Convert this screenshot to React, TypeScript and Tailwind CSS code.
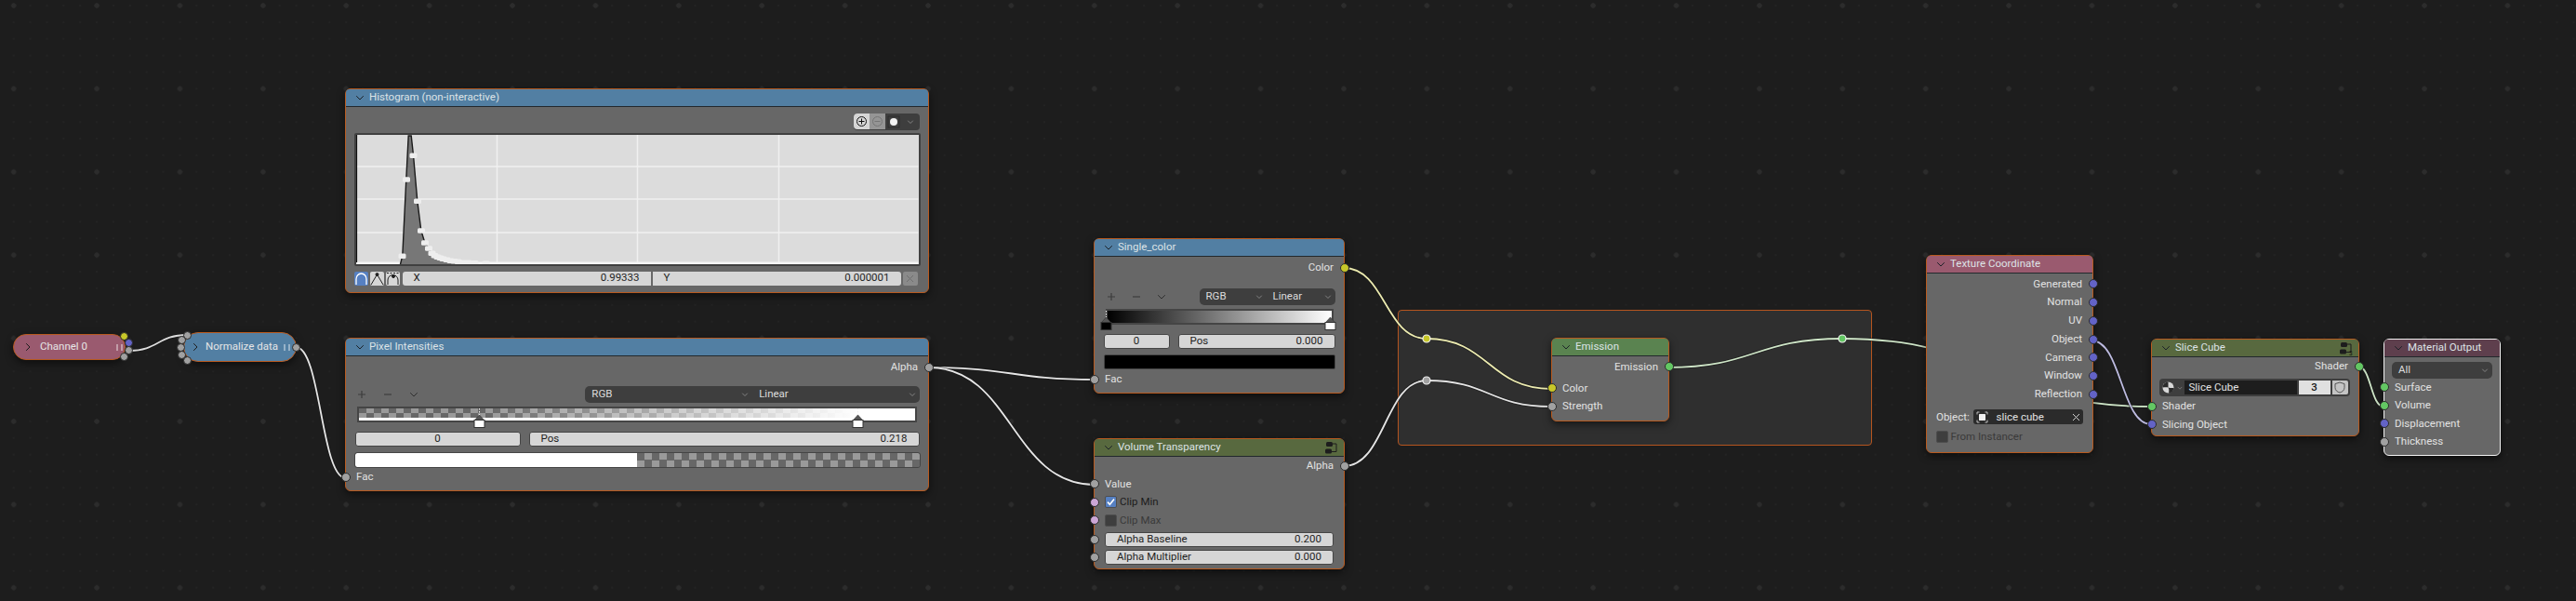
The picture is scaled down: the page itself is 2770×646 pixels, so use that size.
import React, { ReactNode } from 'react';

const socketColors = {
  gray: 'bg-[#a1a1a1]',
  yellow: 'bg-[#c7c729]',
  blue: 'bg-[#6363c7]',
  green: 'bg-[#63c763]',
  pink: 'bg-[#cca6d6]',
};

type SocketColor = keyof typeof socketColors;

function Socket({ side, color = 'gray' }: { side: 'left' | 'right'; color?: SocketColor }) {
  return (
    <span
      className={`absolute top-1/2 -translate-y-1/2 w-[10px] h-[10px] rounded-full border border-[#2b2b2b] z-10 ${socketColors[color]} ${
        side === 'left' ? 'left-[-5.5px]' : 'right-[-5.5px]'
      }`}
    />
  );
}

function Chevron({ className = 'text-[#1c2228]' }: { className?: string }) {
  return (
    <svg width="10" height="10" viewBox="0 0 10 10" className={`shrink-0 ${className}`}>
      <path d="M1.2 3.2 5 7l3.8-3.8" fill="none" stroke="currentColor" strokeWidth="1" />
    </svg>
  );
}

function GroupIcon({ count }: { count?: string }) {
  return (
    <svg width="16" height="15" viewBox="0 0 16 15" className="shrink-0 text-[#1d1d1d]">
      <rect x="2" y="1" width="7" height="5" rx="1.5" fill="currentColor" />
      <rect x="1" y="8.5" width="7" height="5" rx="1.5" fill="currentColor" />
      <path d="M9 3h4v8.5H8" fill="none" stroke="currentColor" strokeWidth="1" />
      {count && (
        <text x="11" y="14.5" fontSize="6.5" fontFamily="Roboto, sans-serif" fill="#111">
          {count}
        </text>
      )}
    </svg>
  );
}

function Node({
  className,
  title,
  header,
  icon,
  children,
}: {
  className: string;
  title: string;
  header: string;
  icon?: ReactNode;
  children: ReactNode;
}) {
  return (
    <div className={`absolute rounded-[6px] border-[1.5px] bg-[#676767] shadow-[0_3px_8px_rgba(0,0,0,0.55)] ${className}`}>
      <div className={`flex items-center h-[19px] pl-[10px] pr-[5px] gap-[5px] rounded-t-[4px] border-b border-[#22282c] text-[#dde3e6] ${header}`}>
        <Chevron />
        <span className="flex-1 whitespace-nowrap">{title}</span>
        {icon}
      </div>
      {children}
    </div>
  );
}

function Row({
  className = 'h-[19.5px]',
  left,
  right,
  align = 'left',
  children,
}: {
  className?: string;
  left?: SocketColor;
  right?: SocketColor;
  align?: 'left' | 'right';
  children?: ReactNode;
}) {
  return (
    <div className={`relative flex items-center text-[#e2e2e2] ${align === 'right' ? 'justify-end pr-[11px]' : 'pl-[11px]'} ${className}`}>
      {left && <Socket side="left" color={left} />}
      {right && <Socket side="right" color={right} />}
      {children}
    </div>
  );
}

function Field({ className, label, value }: { className: string; label?: string; value: string }) {
  return (
    <div className={`flex items-center h-[16px] rounded-[3px] border-[1.5px] border-[#454545] bg-[#d6d6d6] text-[#1f1f1f] ${label ? 'justify-between px-[12px]' : 'justify-center'} ${className}`}>
      {label && <span>{label}</span>}
      <span>{value}</span>
    </div>
  );
}

function Dropdown({ className, label }: { className: string; label: string }) {
  return (
    <div className={`flex items-center justify-between h-[18px] bg-[#3e3e3e] text-[#dcdcdc] pl-[7px] pr-[3px] ${className}`}>
      <span>{label}</span>
      <Chevron className="text-[#9a9a9a] scale-75" />
    </div>
  );
}

function RampToolbar({ plusClass, leftClass, rgbClass, linearClass }: { plusClass: string; leftClass: string; rgbClass: string; linearClass: string }) {
  return (
    <div className={`flex items-center ${leftClass}`}>
      <div className={`flex items-center text-[#3d3d3d] ${plusClass}`}>
        <svg width="10" height="10" viewBox="0 0 10 10"><path d="M5 1v8M1 5h8" stroke="currentColor" strokeWidth="1.2" /></svg>
        <svg width="10" height="10" viewBox="0 0 10 10"><path d="M1 5h8" stroke="currentColor" strokeWidth="1.2" /></svg>
        <Chevron className="text-[#2f2f2f]" />
      </div>
      <Dropdown className={`rounded-l-[5px] ${rgbClass}`} label="RGB" />
      <Dropdown className={`rounded-r-[5px] ${linearClass}`} label="Linear" />
    </div>
  );
}

function RampHandle({ className, fill = '#ffffff' }: { className: string; fill?: string }) {
  return (
    <svg width="13" height="21" viewBox="0 0 13 21" className={`absolute top-0 ${className}`}>
      <path d="M6.5 0v7" stroke="#eeeeee" strokeWidth="1" strokeDasharray="1.5 1.5" />
      <path d="M6.5 7 1.5 12.5h10z" fill="#555555" stroke="#333333" strokeWidth="0.6" />
      <rect x="1" y="12.5" width="11" height="8" fill={fill} stroke="#333333" />
    </svg>
  );
}

function Checkbox({ checked }: { checked?: boolean }) {
  return (
    <span className={`flex items-center justify-center w-[13px] h-[13px] rounded-[2px] border border-[#4d4d4d] shrink-0 ${checked ? 'bg-[#5680c2]' : 'bg-[#3e3e3e]'}`}>
      {checked && (
        <svg width="11" height="11" viewBox="0 0 11 11">
          <path d="m2 5.6 2.4 2.6L9 2.4" fill="none" stroke="#fff" strokeWidth="1.6" />
        </svg>
      )}
    </span>
  );
}

function CurveButton({ active, children }: { active?: boolean; children: ReactNode }) {
  return (
    <span className={`flex items-center justify-center w-[15px] h-[15px] rounded-[2px] ${active ? 'bg-[#5680c2] text-white' : 'bg-[#d6d6d6] text-[#1f1f1f]'}`}>
      <svg width="15" height="15" viewBox="0 0 15 15" fill="none" stroke="currentColor" strokeWidth="1">
        {children}
      </svg>
    </span>
  );
}

function Histogram() {
  const curve: [number, number][] = [
    [430, 284], [432.3, 275], [436.3, 192.7], [438.7, 146], [441.7, 146], [444, 166.7], [448.3, 216], [452.3, 247.7], [456.3, 260.7],
    [460.3, 266.7], [464.3, 273.3], [471.7, 277.3], [481.7, 280], [491.7, 284],
  ];
  const dots: [number, number][] = [
    [432, 275], [436.5, 192.7], [444, 167], [448.5, 216], [452.5, 247.7], [456.5, 260.7], [460.5, 266.7], [464, 272], [467, 274.5], [470, 276],
    [473, 277], [476, 278], [480, 279], [484, 280], [488, 280.5], [492, 281], [497, 282], [503, 282], [510, 282.5], [522, 283],
  ];
  const line = curve.map((p) => p.join(',')).join(' ');
  return (
    <div className="mt-[3px] h-[143px] border-2 border-[#404040] bg-[#dcdcdc] rounded-[2px]">
      <svg viewBox="383 145 604 139" className="w-full h-full block">
        {[534, 685, 837].map((x) => (
          <path key={x} d={`M${x} 145v139`} stroke="#f0f0f0" strokeWidth="1.5" />
        ))}
        {[179, 214, 250].map((y) => (
          <path key={y} d={`M383 ${y}h604`} stroke="#f0f0f0" strokeWidth="1.5" />
        ))}
        <path d="M383 283h604" stroke="#f4f4f4" strokeWidth="3" />
        <path d="M383 145v137" stroke="#111" strokeWidth="1.2" />
        <polygon points={line} fill="#777777" />
        <polyline points={line} fill="none" stroke="#1a1a1a" strokeWidth="1.4" />
        {dots.map(([x, y]) => (
          <rect key={x} x={x - 4} y={y - 2.5} width="8" height="5.5" rx="1.5" fill="#eeeeee" />
        ))}
      </svg>
    </div>
  );
}

function Wire({ from, to, color }: { from: [number, number]; to: [number, number]; color: string }) {
  const dx = Math.abs(to[0] - from[0]) * 0.5;
  const d = `M${from[0]} ${from[1]}C${from[0] + dx} ${from[1]} ${to[0] - dx} ${to[1]} ${to[0]} ${to[1]}`;
  return (
    <>
      <path d={d} fill="none" stroke="#151515" strokeOpacity="0.6" strokeWidth="3.4" />
      <path d={d} fill="none" stroke={color} strokeWidth="1.8" />
    </>
  );
}

const wires: { from: [number, number]; to: [number, number]; color: string }[] = [
  { from: [139, 377], to: [201, 360], color: '#dcdcdc' },
  { from: [318, 373], to: [372, 514], color: '#e4e4e4' },
  { from: [999, 395], to: [1177, 408], color: '#e6e6e6' },
  { from: [999, 395], to: [1177, 521], color: '#e6e6e6' },
  { from: [1445, 288], to: [1534, 364], color: '#ecebb0' },
  { from: [1534, 364], to: [1668, 418], color: '#ecebb0' },
  { from: [1445, 501], to: [1534, 409], color: '#e4e4e4' },
  { from: [1534, 409], to: [1668, 437], color: '#e4e4e4' },
  { from: [1793, 395], to: [1981, 364], color: '#cfe6c8' },
  { from: [1981, 364], to: [2313, 437], color: '#cfe6c8' },
  { from: [2249, 366], to: [2313, 456], color: '#bdbbe0' },
  { from: [2536, 394], to: [2563, 437], color: '#cfe6c8' },
];

function PinMarks() {
  return (
    <span className="flex gap-[3px] opacity-40 shrink-0">
      <span className="w-[2px] h-[7px] bg-white" />
      <span className="w-[2px] h-[7px] bg-white" />
    </span>
  );
}

export default function App() {
  return (
    <div className="relative w-[2770px] h-[646px] overflow-hidden bg-[#1d1d1d] font-[Roboto,sans-serif] text-[11.5px] leading-none bg-[radial-gradient(circle,#2c2c2c_2.4px,transparent_3px),radial-gradient(circle,#232323_1px,transparent_1.5px)] [background-size:89.4px_89.4px,17.88px_17.88px] [background-position:-30px_-38.7px,5.76px_-2.94px]">
      {/* frame behind the emission node */}
      <div className="absolute left-[1503px] top-[333px] w-[510px] h-[146px] rounded-[4px] border border-[#b5551f] bg-[#2f2f2f]" />

      <svg width="2770" height="646" className="absolute left-0 top-0">
        {wires.map((w) => (
          <Wire key={`${w.from}-${w.to}`} {...w} />
        ))}
        <circle cx="1534" cy="364" r="4" fill="#c7c729" stroke="#f2f2f2" strokeWidth="1.2" />
        <circle cx="1534" cy="409" r="4" fill="#a1a1a1" stroke="#f2f2f2" strokeWidth="1.2" />
        <circle cx="1981" cy="364" r="4" fill="#63c763" stroke="#f2f2f2" strokeWidth="1.2" />
      </svg>

      {/* collapsed nodes */}
      <div className="absolute left-[14px] top-[359px] w-[121px] h-[28px] rounded-[14px] border-[1.5px] border-[#b85a1f] bg-[#9a5a6f] flex items-center pl-[10px] pr-[2px] gap-[8px] text-[#e6e6e6] shadow-[0_3px_8px_rgba(0,0,0,0.55)]">
        <Chevron className="text-[#1d1d1d] -rotate-90" />
        <span className="flex-1 whitespace-nowrap">Channel 0</span>
        <PinMarks />
        <span className="absolute left-[114px] top-[-3px] w-[9px] h-[9px] rounded-full border border-[#2b2b2b] bg-[#c7c729]" />
        <span className="absolute left-[119px] top-[4px] w-[9px] h-[9px] rounded-full border border-[#2b2b2b] bg-[#6363c7]" />
        <span className="absolute left-[119px] top-[12px] w-[9px] h-[9px] rounded-full border border-[#2b2b2b] bg-[#a1a1a1]" />
        <span className="absolute left-[114px] top-[19px] w-[9px] h-[9px] rounded-full border border-[#2b2b2b] bg-[#a1a1a1]" />
      </div>

      <div className="absolute left-[197px] top-[357px] w-[122px] h-[32px] rounded-[16px] border-[1.5px] border-[#b85a1f] bg-[#527fa3] flex items-center pl-[7px] pr-[6px] gap-[6px] text-[#e6e6e6] shadow-[0_3px_8px_rgba(0,0,0,0.55)]">
        <Chevron className="text-[#1d1d1d] -rotate-90" />
        <span className="flex-1 whitespace-nowrap">Normalize data</span>
        <PinMarks />
        <span className="absolute left-[-1.5px] top-[-2.5px] w-[9px] h-[9px] rounded-full border border-[#2b2b2b] bg-[#a1a1a1]" />
        <span className="absolute left-[-7.5px] top-[2.5px] w-[9px] h-[9px] rounded-full border border-[#2b2b2b] bg-[#a1a1a1]" />
        <span className="absolute left-[-8.5px] top-[10.5px] w-[9px] h-[9px] rounded-full border border-[#2b2b2b] bg-[#a1a1a1]" />
        <span className="absolute left-[-7.5px] top-[18.5px] w-[9px] h-[9px] rounded-full border border-[#2b2b2b] bg-[#a1a1a1]" />
        <span className="absolute left-[-1.5px] top-[24.5px] w-[9px] h-[9px] rounded-full border border-[#2b2b2b] bg-[#a1a1a1]" />
        <span className="absolute right-[-5px] top-[10.5px] w-[9px] h-[9px] rounded-full border border-[#2b2b2b] bg-[#a1a1a1]" />
      </div>

      {/* histogram */}
      <Node className="left-[371px] top-[95px] w-[628px] h-[220px] border-[#b85a1f]" header="bg-[#527fa3]" title="Histogram (non-interactive)">
        <div className="px-[8.5px] pt-[6.5px]">
          <div className="flex justify-end">
            <div className="flex items-center w-[71px] h-[18px] rounded-[4px] bg-[#3e3e3e] mr-[0.5px]">
              <span className="flex items-center justify-center w-[17px] h-[17px] bg-[#d6d6d6] rounded-l-[4px]">
                <svg width="13" height="13" viewBox="0 0 13 13" fill="none" stroke="#111" strokeWidth="1">
                  <circle cx="6.5" cy="6.5" r="5" />
                  <path d="M6.5 3.5v6M3.5 6.5h6" />
                </svg>
              </span>
              <span className="flex items-center justify-center w-[17px] h-[17px] bg-[#959595]">
                <svg width="13" height="13" viewBox="0 0 13 13" fill="none" stroke="#757575" strokeWidth="1">
                  <circle cx="6.5" cy="6.5" r="5" />
                  <path d="M3.5 6.5h6" />
                </svg>
              </span>
              <span className="flex items-center justify-center w-[17px] h-[17px]">
                <svg width="14" height="14" viewBox="0 0 14 14">
                  <rect x="1" y="1" width="12" height="12" fill="none" stroke="#2c2c2c" />
                  <circle cx="7" cy="7" r="4" fill="#f2f2f2" />
                </svg>
              </span>
              <span className="flex flex-1 justify-center">
                <Chevron className="text-[#9a9a9a] scale-75" />
              </span>
            </div>
          </div>
          <Histogram />
          <div className="flex items-center h-[15px] mt-[6px] gap-[2px] text-[#1f1f1f]">
            <CurveButton active>
              <path d="M2 14V8a5.5 6 0 0 1 11 0v6" strokeWidth="1.3" />
            </CurveButton>
            <CurveButton>
              <path d="M1 14 7.5 3 14 14" />
              <circle cx="7.5" cy="3" r="1.5" fill="currentColor" />
            </CurveButton>
            <CurveButton>
              <path d="M2 14V9a5.5 5.5 0 0 1 11 0v5" />
              <path d="M1 1.5h13" strokeDasharray="2 1.5" />
              <circle cx="8" cy="5" r="1.5" fill="currentColor" />
            </CurveButton>
            <div className="flex items-center justify-between w-[267px] h-[15px] px-[12px] bg-[#d6d6d6] rounded-l-[3px] ml-[1px]">
              <span>X</span>
              <span>0.99333</span>
            </div>
            <div className="flex items-center justify-between w-[267px] h-[15px] px-[12px] bg-[#d6d6d6] rounded-r-[3px]">
              <span>Y</span>
              <span>0.000001</span>
            </div>
            <span className="flex items-center justify-center w-[16px] h-[15px] rounded-[2px] bg-[#8a8a8a] text-[#6f6f6f]">
              <svg width="9" height="9" viewBox="0 0 9 9"><path d="m1 1 7 7M8 1 1 8" stroke="currentColor" strokeWidth="1" /></svg>
            </span>
          </div>
        </div>
      </Node>

      {/* pixel intensities */}
      <Node className="left-[371px] top-[363px] w-[628px] h-[165px] border-[#b85a1f]" header="bg-[#527fa3]" title="Pixel Intensities">
        <Row className="h-[20px] mt-[1.5px]" align="right" right="gray">Alpha</Row>
        <RampToolbar leftClass="mt-[10px] pl-[12px] pr-[9px]" plusClass="w-[245.5px] gap-[18px]" rgbClass="w-[180px]" linearClass="w-[180px]" />
        <div className="relative h-[16.5px] mx-[12px] mt-[4.5px] border-2 border-[#454545] bg-white">
          <div className="h-[10px] overflow-hidden bg-[#9a9a9a] [background-image:repeating-conic-gradient(#9a9a9a_0_25%,#676767_0_50%)] [background-size:16px_10px]">
            <div className="h-full bg-[linear-gradient(to_right,transparent_22%,#ffffff_90%)]" />
          </div>
          <RampHandle className="left-[123px]" />
          <RampHandle className="left-[530px]" />
        </div>
        <div className="flex mt-[10px] gap-[9px] px-[9.5px]">
          <Field className="w-[178px]" value="0" />
          <Field className="flex-1" label="Pos" value="0.218" />
        </div>
        <div className="flex h-[15px] mt-[7px] mx-[9.5px] rounded-[2px] outline-[1.5px] outline-[#454545] overflow-hidden">
          <div className="w-1/2 bg-white" />
          <div className="w-1/2 bg-[#9a9a9a] [background-image:repeating-conic-gradient(#9a9a9a_0_25%,#676767_0_50%)] [background-size:16px_15px]" />
        </div>
        <Row className="h-[20px] mt-[1px]" left="gray">Fac</Row>
      </Node>

      {/* single color */}
      <Node className="left-[1176px] top-[256px] w-[270px] h-[167px] border-[#b85a1f]" header="bg-[#527fa3]" title="Single_color">
        <Row className="h-[20px] mt-[1.5px]" align="right" right="yellow">Color</Row>
        <RampToolbar leftClass="mt-[12px] pl-[13px] pr-[8.5px]" plusClass="w-[99.5px] gap-[17px]" rgbClass="w-[72px]" linearClass="w-[74px]" />
        <div className="relative h-[17px] mx-[11.5px] mt-[4px] border-2 border-[#454545] bg-[linear-gradient(to_right,#000000,#ffffff)]">
          <RampHandle className="left-[-8px]" fill="#000000" />
          <RampHandle className="left-[233px]" />
        </div>
        <div className="flex mt-[10px] gap-[9px] px-[9.5px]">
          <Field className="w-[71px]" value="0" />
          <Field className="flex-1" label="Pos" value="0.000" />
        </div>
        <div className="h-[16px] mt-[6px] mx-[9.5px] rounded-[2px] border-[1.5px] border-[#454545] bg-black" />
        <Row className="h-[20px] mt-[1px]" left="gray">Fac</Row>
      </Node>

      {/* volume transparency */}
      <Node className="left-[1176px] top-[471px] w-[270px] h-[141px] border-[#b85a1f]" header="bg-[#58693f]" title="Volume Transparency" icon={<GroupIcon />}>
        <Row align="right" right="gray">Alpha</Row>
        <Row left="gray">Value</Row>
        <Row left="pink" className="h-[19.5px] gap-[3px] text-[#1f1f1f]">
          <Checkbox checked />
          <span className="text-[#1c1c1c]">Clip Min</span>
        </Row>
        <Row left="pink" className="h-[19.5px] gap-[3px]">
          <Checkbox />
          <span className="text-[#3a3a3a]">Clip Max</span>
        </Row>
        <Row left="gray" className="h-[14.5px] mt-[3.75px] pr-[11px]">
          <Field className="w-full h-[15px] rounded-[3px]" label="Alpha Baseline" value="0.200" />
        </Row>
        <Row left="gray" className="h-[14.5px] mt-[4.5px] pr-[11px]">
          <Field className="w-full h-[15px] rounded-[3px]" label="Alpha Multiplier" value="0.000" />
        </Row>
      </Node>

      {/* emission */}
      <Node className="left-[1668px] top-[363px] w-[127px] h-[90px] border-[#b85a1f]" header="bg-[#5a8350]" title="Emission">
        <Row className="h-[19.5px] mt-[1.5px]" align="right" right="green">Emission</Row>
        <Row className="h-[19.5px] mt-[3.5px]" left="yellow">Color</Row>
        <Row left="gray">Strength</Row>
      </Node>

      {/* texture coordinate */}
      <Node className="left-[2071px] top-[274px] w-[180px] h-[213px] border-[#b85a1f]" header="bg-[#9a5a6f]" title="Texture Coordinate">
        <div className="mt-[1.5px]">
          {['Generated', 'Normal', 'UV', 'Object', 'Camera', 'Window', 'Reflection'].map((name) => (
            <Row key={name} className="h-[19.75px]" align="right" right="blue">
              {name}
            </Row>
          ))}
        </div>
        <div className="flex items-center justify-between mt-[6.5px] pl-[10px] pr-[10.5px] text-[#e2e2e2]">
          <span>Object:</span>
          <div className="flex items-center w-[118px] h-[16px] px-[3px] gap-[9px] rounded-[3px] bg-[#2b2b2b] text-[#e2e2e2]">
            <svg width="13" height="13" viewBox="0 0 13 13" className="shrink-0">
              <path d="M1 3.5V1h2.5M9.5 1H12v2.5M12 9.5V12H9.5M3.5 12H1V9.5" fill="none" stroke="#cfcfcf" strokeWidth="0.9" />
              <rect x="3" y="3" width="7" height="7" rx="0.5" fill="#efefef" />
            </svg>
            <span className="flex-1">slice cube</span>
            <svg width="9" height="9" viewBox="0 0 9 9" className="shrink-0"><path d="m1 1 7 7M8 1 1 8" stroke="#cfcfcf" strokeWidth="1" /></svg>
          </div>
        </div>
        <div className="flex items-center h-[20px] mt-[3px] pl-[9.5px] gap-[3px] text-[#3a3a3a]">
          <Checkbox />
          <span>From Instancer</span>
        </div>
      </Node>

      {/* slice cube */}
      <Node className="left-[2313px] top-[364px] w-[224px] h-[105px] border-[#b85a1f]" header="bg-[#58693f]" title="Slice Cube" icon={<GroupIcon count="3" />}>
        <Row className="h-[19.5px]" align="right" right="green">Shader</Row>
        <div className="flex items-center h-[19px] mt-[3.5px] ml-[7.5px] mr-[9px] rounded-[4px] bg-[#3e3e3e] text-[#e2e2e2]">
          <span className="flex items-center w-[27px] pl-[3px] gap-[1px]">
            <svg width="13" height="13" viewBox="0 0 13 13">
              <circle cx="6.5" cy="6.5" r="6" fill="#d8d8d8" />
              <path d="M6.5 .5A6 6 0 0 0 .5 6.5c2 0 4-.5 6 0zM6.5 6.5c1 2 1 4 .5 6A6 6 0 0 0 12.5 7c-2 .2-4 .2-6-.5z" fill="#2b2b2b" />
            </svg>
            <Chevron className="text-[#9a9a9a] scale-[0.6]" />
          </span>
          <span className="flex items-center w-[121px] h-[15px] pl-[5px] bg-[#1d1d1d]">Slice Cube</span>
          <span className="flex items-center justify-center w-[34px] h-[15px] ml-[2px] bg-[#e0e0e0] text-[#1a1a1a] font-medium">3</span>
          <span className="flex items-center justify-center w-[17px] h-[15px] ml-[2px] bg-[#c4c4c4] rounded-r-[2px]">
            <svg width="12" height="13" viewBox="0 0 12 13">
              <path d="M6 1 1 2.6v4C1 9.6 3.5 11.4 6 12c2.5-.6 5-2.4 5-5.4v-4z" fill="none" stroke="#4a4a4a" strokeWidth="0.9" />
            </svg>
          </span>
        </div>
        <Row className="h-[19.5px] mt-[1px]" left="green">Shader</Row>
        <Row className="h-[19.5px]" left="blue">Slicing Object</Row>
      </Node>

      {/* material output */}
      <Node className="left-[2563px] top-[364px] w-[126px] h-[126px] border-[#f2f2f2]" header="bg-[#5e3f4d]" title="Material Output">
        <Dropdown className="mt-[4.5px] mx-[8px] rounded-[5px]" label="All" />
        <Row left="green">Surface</Row>
        <Row left="green">Volume</Row>
        <Row left="blue">Displacement</Row>
        <Row left="gray">Thickness</Row>
      </Node>
    </div>
  );
}
